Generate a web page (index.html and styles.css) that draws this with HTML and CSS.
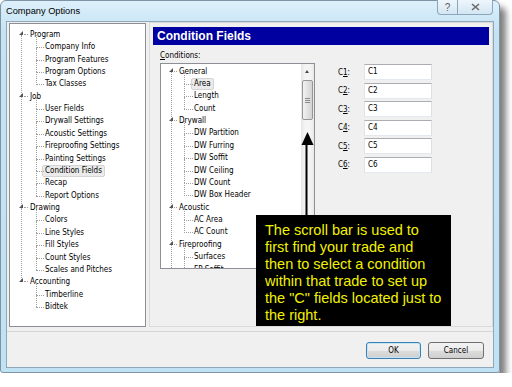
FILE: index.html
```html
<!DOCTYPE html>
<html lang="en">
<head>
    <meta charset="UTF-8">
    <title>Company Options</title>
    <link rel="stylesheet" href="styles.css">
</head>
<body>
    <div class="window">
        <div class="titlebar">
            <span class="title">Company Options</span>
            <div class="caption">
                <span class="cbtn help">?</span>
                <span class="cbtn close">
                    <svg width="9" height="8" viewBox="0 0 9 8"><path d="M1 1 L8 7 M8 1 L1 7" stroke="#6b6b6b" stroke-width="1.6" fill="none"/></svg>
                </span>
            </div>
        </div>

        <div class="client">
            <div class="main">
                <ul class="tree nav">
                    <li class="grp"><span class="lbl">Program</span>
                        <ul>
                            <li>Company Info</li>
                            <li>Program Features</li>
                            <li>Program Options</li>
                            <li>Tax Classes</li>
                        </ul>
                    </li>
                    <li class="grp"><span class="lbl">Job</span>
                        <ul>
                            <li>User Fields</li>
                            <li>Drywall Settings</li>
                            <li>Acoustic Settings</li>
                            <li>Fireproofing Settings</li>
                            <li>Painting Settings</li>
                            <li><span class="sel">Condition Fields</span></li>
                            <li>Recap</li>
                            <li>Report Options</li>
                        </ul>
                    </li>
                    <li class="grp"><span class="lbl">Drawing</span>
                        <ul>
                            <li>Colors</li>
                            <li>Line Styles</li>
                            <li>Fill Styles</li>
                            <li>Count Styles</li>
                            <li>Scales and Pitches</li>
                        </ul>
                    </li>
                    <li class="grp"><span class="lbl">Accounting</span>
                        <ul>
                            <li>Timberline</li>
                            <li>Bidtek</li>
                        </ul>
                    </li>
                </ul>

                <div class="panel">
                    <div class="panel-head">Condition Fields</div>
                    <div class="panel-body">
                        <div class="conditions">
                            <div class="cond-label"><u>C</u>onditions:</div>
                            <div class="cond-box">
                                <ul class="tree cond">
                                    <li class="grp"><span class="lbl">General</span>
                                        <ul>
                                            <li><span class="sel">Area</span></li>
                                            <li>Length</li>
                                            <li>Count</li>
                                        </ul>
                                    </li>
                                    <li class="grp"><span class="lbl">Drywall</span>
                                        <ul>
                                            <li>DW Partition</li>
                                            <li>DW Furring</li>
                                            <li>DW Soffit</li>
                                            <li>DW Ceiling</li>
                                            <li>DW Count</li>
                                            <li>DW Box Header</li>
                                        </ul>
                                    </li>
                                    <li class="grp"><span class="lbl">Acoustic</span>
                                        <ul>
                                            <li>AC Area</li>
                                            <li>AC Count</li>
                                        </ul>
                                    </li>
                                    <li class="grp last"><span class="lbl">Fireproofing</span>
                                        <ul>
                                            <li>Surfaces</li>
                                            <li>FP Soffit</li>
                                        </ul>
                                    </li>
                                </ul>
                                <div class="scroll">
                                    <div class="scroll-up"></div>
                                    <div class="thumb"><span></span><span></span><span></span></div>
                                </div>
                            </div>
                        </div>

                        <div class="cfields">
                            <div class="crow"><label>C<u>1</u>:</label><div class="input">C1</div></div>
                            <div class="crow"><label>C<u>2</u>:</label><div class="input">C2</div></div>
                            <div class="crow"><label>C<u>3</u>:</label><div class="input">C3</div></div>
                            <div class="crow"><label>C<u>4</u>:</label><div class="input">C4</div></div>
                            <div class="crow"><label>C<u>5</u>:</label><div class="input">C5</div></div>
                            <div class="crow"><label>C<u>6</u>:</label><div class="input">C6</div></div>
                        </div>
                    </div>
                </div>
            </div>

            <div class="footer">
                <button class="btn default">OK</button>
                <button class="btn">Cancel</button>
            </div>

            <!-- annotation laid over the dialog -->
            <svg class="arrow" width="13" height="83" viewBox="0 0 13 83">
                <polygon points="6.5,0 0.5,13 12.5,13" fill="#000"/>
                <rect x="4.5" y="12" width="2" height="71" fill="#000"/>
            </svg>
            <div class="callout">
                The scroll bar is used to<br>
                first find your trade and<br>
                then to select a condition<br>
                within that trade to set up<br>
                the "C" fields located just to<br>
                the right.
            </div>
        </div>
    </div>
</body>
</html>
```

FILE: styles.css
```css
body {
    margin: 0;
    background: #fff;
    font-family: "Liberation Sans", Arial, sans-serif;
}

/* Window frame */
.window {
    width: 500px;
    height: 373px;
    box-sizing: border-box;
    border: 1px solid #7d93a6;
    border-radius: 6px 6px 3px 3px;
    background: linear-gradient(#dcf0fb, #c6e3f4 30px, #c0e2f3);
    box-shadow: 6px 7px 6px rgba(0, 0, 0, 0.5);
    display: flex;
    flex-direction: column;
}

.titlebar {
    height: 21px;
    display: flex;
    align-items: flex-start;
    padding-left: 5px;
}

.title {
    font-size: 9.25px;
    line-height: 21px;
    color: #000;
}

.caption {
    margin-left: auto;
    margin-right: 6px;
    margin-top: -1px;
    display: flex;
}

.cbtn {
    height: 15px;
    box-sizing: border-box;
    border: 1px solid #8ea6bb;
    border-top: none;
    background: linear-gradient(#eef6fc, #d3e6f3);
    display: flex;
    align-items: center;
    justify-content: center;
    font-size: 10px;
    color: #5a5a5a;
}

.cbtn.help {
    width: 21px;
    border-radius: 0 0 0 4px;
}

.cbtn.close {
    width: 35px;
    border-left: none;
    border-radius: 0 0 4px 0;
}

.client {
    position: relative;
    margin: 0 6px;
    height: 345px;
    background: #f0f0f0;
    box-shadow: 0 0 0 1px #90a7ba;
}

.main {
    display: flex;
    gap: 3px;
    height: 305px;
    padding-left: 2px;
}

/* Tree views */
.tree,
.tree ul {
    list-style: none;
    margin: 0;
    padding: 0;
}

.tree {
    font-family: "DejaVu Sans Condensed", "DejaVu Sans", sans-serif;
    font-stretch: condensed;
    font-size: 8px;
    line-height: 12.37px;
    color: #000;
    white-space: nowrap;
    overflow: hidden;
}

.tree li {
    position: relative;
}

.tree .grp {
    padding-left: 20px;
}

.tree .grp:not(:last-child)::before {
    content: "";
    position: absolute;
    left: 11px;
    top: 6px;
    height: 100%;
    border-left: 1px dotted #a0a0a0;
}

.tree .lbl {
    position: relative;
}

.tree .lbl::before {
    content: "";
    position: absolute;
    left: -11px;
    top: 1px;
    width: 0;
    height: 0;
    border-left: 4px solid transparent;
    border-bottom: 4px solid #555;
    z-index: 1;
}

.tree .lbl::after {
    content: "";
    position: absolute;
    left: -6px;
    top: 4px;
    width: 4px;
    border-top: 1px dotted #a0a0a0;
}

.tree .grp ul {
    padding-left: 15px;
}

.tree .grp ul li::before {
    content: "";
    position: absolute;
    left: -9px;
    top: -6px;
    height: 12.37px;
    border-left: 1px dotted #a0a0a0;
}

.tree .grp ul li::after {
    content: "";
    position: absolute;
    left: -9px;
    top: 6px;
    width: 8px;
    border-top: 1px dotted #a0a0a0;
}

.tree .sel {
    display: inline-block;
    line-height: 10px;
    margin-left: -3px;
    padding: 0 2px 0 2px;
    border: 1px solid #d4d4d4;
    border-radius: 2px;
    background: #ebebeb;
    vertical-align: top;
}

.nav {
    width: 137px;
    height: 304px;
    margin-top: 1px;
    box-sizing: border-box;
    border: 1px solid #8c8f96;
    background: #fff;
    padding-top: 4.8px;
}

/* Right panel */
.panel {
    flex: 1;
    box-sizing: border-box;
    border: 1px solid #dadada;
}

.panel-head {
    margin: 4px 3px 0 3px;
    height: 18px;
    padding-left: 4px;
    background: #0000a0;
    color: #fff;
    font-size: 12px;
    font-weight: bold;
    line-height: 18px;
}

.panel-body {
    display: flex;
    margin-top: 6px;
    padding-left: 10px;
}

.cond-label,
.crow,
.btn {
    font-family: "DejaVu Sans Condensed", "DejaVu Sans", sans-serif;
    font-stretch: condensed;
}

.cond-label {
    font-size: 8px;
    line-height: 10px;
    margin-bottom: 2px;
}

.cond-box {
    width: 155px;
    height: 206px;
    box-sizing: border-box;
    border: 1px solid #8c8f96;
    background: #fff;
    display: flex;
}

.tree.cond {
    flex: 1;
    padding-top: 1.5px;
}

.tree.cond .grp {
    padding-left: 18px;
}

.tree.cond .grp:not(:last-child)::before {
    left: 10px;
}

.tree.cond .grp.last::before {
    content: "";
    position: absolute;
    left: 10px;
    top: 6px;
    height: 100%;
    border-left: 1px dotted #a0a0a0;
}

.tree.cond .lbl::before {
    left: -10px;
}

.tree.cond .lbl::after {
    left: -5px;
    width: 3px;
}

.tree.cond .grp ul li::before,
.tree.cond .grp ul li::after {
    left: -10px;
}

.tree.cond .grp ul li::after {
    width: 9px;
}

.scroll {
    width: 13px;
    background: linear-gradient(to right, #e6e6e6, #f4f4f4 30%, #f4f4f4 70%, #e9e9e9);
    display: flex;
    flex-direction: column;
    align-items: center;
}

.scroll-up {
    height: 16px;
    width: 100%;
    position: relative;
}

.scroll-up::before {
    content: "";
    position: absolute;
    left: 4px;
    top: 6px;
    border-left: 2.5px solid transparent;
    border-right: 2.5px solid transparent;
    border-bottom: 3px solid #4a4a4a;
}

.thumb {
    width: 11px;
    height: 40px;
    box-sizing: border-box;
    border: 1px solid #979797;
    border-radius: 2px;
    background: linear-gradient(to right, #f2f2f2, #e2e2e2 50%, #d3d3d3);
    display: flex;
    flex-direction: column;
    align-items: center;
    justify-content: center;
    gap: 1px;
}

.thumb span {
    width: 5px;
    height: 1px;
    background: #8a8a8a;
}

.cfields {
    margin-left: 23px;
    margin-top: 13px;
    display: flex;
    flex-direction: column;
    gap: 2.6px;
}

.crow {
    display: flex;
    align-items: center;
    height: 16px;
}

.crow label {
    width: 26px;
    font-size: 8px;
}

.crow .input {
    width: 68px;
    height: 16px;
    box-sizing: border-box;
    border: 1px solid;
    border-color: #abadb3 #dbdfe6 #e3e9ef #e2e3ea;
    background: #fff;
    padding-left: 3px;
    font-size: 8px;
    line-height: 14px;
}

/* Buttons row */
.footer {
    margin-top: 4px;
    border-top: 1px solid #d5d5d5;
    display: flex;
    justify-content: flex-end;
    gap: 7px;
    padding: 10px 9px 0 0;
}

.btn {
    width: 55px;
    height: 17px;
    padding: 0;
    font-size: 8px;
    color: #000;
    border: 1px solid #707070;
    border-radius: 3px;
    background: linear-gradient(#f2f2f2, #ebebeb 50%, #dddddd 50%, #cfcfcf);
}

.btn.default {
    border-color: #3c7fb1;
    box-shadow: inset 0 0 0 1px #c4e5f6;
}

.btn + .btn {
    width: 56px;
}

/* Annotation */
.arrow {
    position: absolute;
    left: 294px;
    top: 110px;
}

.callout {
    position: absolute;
    left: 249px;
    top: 193px;
    width: 195px;
    height: 111px;
    box-sizing: border-box;
    padding: 7px 0 0 9px;
    background: #000;
    color: #f2f200;
    font-size: 14.5px;
    line-height: 17px;
    white-space: nowrap;
}
```
